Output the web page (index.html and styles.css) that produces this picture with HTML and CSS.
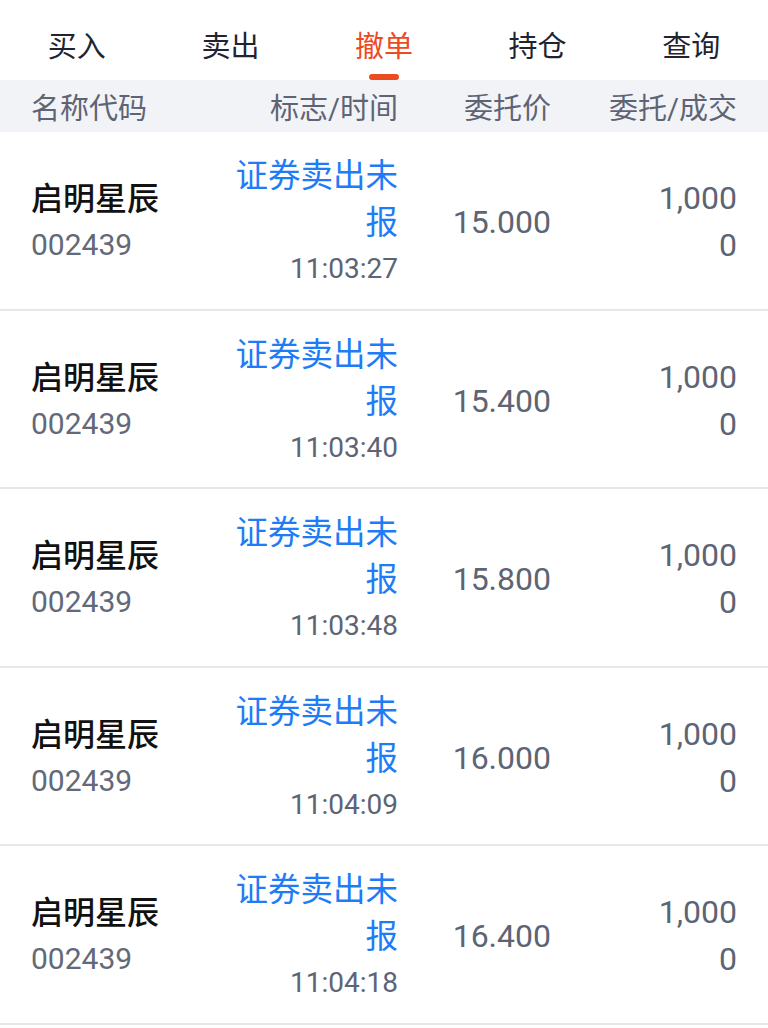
FILE: index.html
```html
<!DOCTYPE html>
<html lang="zh-CN">
<head>
    <meta charset="UTF-8">
    <meta name="viewport" content="width=device-width, initial-scale=1.0">
    <title>撤单</title>
    <link rel="stylesheet" href="styles.css">
</head>
<body>
    <div class="tabs">
        <div class="tab">买入</div>
        <div class="tab">卖出</div>
        <div class="tab active">撤单</div>
        <div class="tab">持仓</div>
        <div class="tab">查询</div>
    </div>

    <div class="list-head">
        <div class="col-name">名称代码</div>
        <div class="col-flag">标志/时间</div>
        <div class="col-price">委托价</div>
        <div class="col-qty">委托/成交</div>
    </div>

    <div id="orders">
        <div class="order">
            <div class="col-name">
                <div class="stock-name">启明星辰</div>
                <div class="stock-code">002439</div>
            </div>
            <div class="col-flag">
                <div class="flag">证券卖出未报</div>
                <div class="time">11:03:27</div>
            </div>
            <div class="col-price">15.000</div>
            <div class="col-qty">
                <div>1,000</div>
                <div>0</div>
            </div>
        </div>
        <div class="order">
            <div class="col-name">
                <div class="stock-name">启明星辰</div>
                <div class="stock-code">002439</div>
            </div>
            <div class="col-flag">
                <div class="flag">证券卖出未报</div>
                <div class="time">11:03:40</div>
            </div>
            <div class="col-price">15.400</div>
            <div class="col-qty">
                <div>1,000</div>
                <div>0</div>
            </div>
        </div>
        <div class="order">
            <div class="col-name">
                <div class="stock-name">启明星辰</div>
                <div class="stock-code">002439</div>
            </div>
            <div class="col-flag">
                <div class="flag">证券卖出未报</div>
                <div class="time">11:03:48</div>
            </div>
            <div class="col-price">15.800</div>
            <div class="col-qty">
                <div>1,000</div>
                <div>0</div>
            </div>
        </div>
        <div class="order">
            <div class="col-name">
                <div class="stock-name">启明星辰</div>
                <div class="stock-code">002439</div>
            </div>
            <div class="col-flag">
                <div class="flag">证券卖出未报</div>
                <div class="time">11:04:09</div>
            </div>
            <div class="col-price">16.000</div>
            <div class="col-qty">
                <div>1,000</div>
                <div>0</div>
            </div>
        </div>
        <div class="order">
            <div class="col-name">
                <div class="stock-name">启明星辰</div>
                <div class="stock-code">002439</div>
            </div>
            <div class="col-flag">
                <div class="flag">证券卖出未报</div>
                <div class="time">11:04:18</div>
            </div>
            <div class="col-price">16.400</div>
            <div class="col-qty">
                <div>1,000</div>
                <div>0</div>
            </div>
        </div>
    </div>
</body>
</html>
```

FILE: styles.css
```css
body {
    font-family: Roboto, "Noto Sans CJK SC", sans-serif;
    margin: 0;
    padding: 0;
    background-color: #fff;
    color: #5d6474;
}
.tabs {
    display: flex;
    height: 80px;
}
.tab {
    flex: 1;
    display: flex;
    justify-content: center;
    align-items: center;
    padding-top: 8px;
    box-sizing: border-box;
    font-size: 29px;
    color: #1f2430;
    position: relative;
}
.tab.active {
    color: #ee4a1f;
}
.tab.active::after {
    content: "";
    position: absolute;
    left: 50%;
    bottom: 0;
    width: 30px;
    height: 6px;
    margin-left: -15px;
    border-radius: 3px;
    background-color: #ee4a1f;
}
.list-head,
.order {
    display: grid;
    grid-template-columns: 1fr 170px 153px 186px;
    padding: 0 31px;
    align-items: center;
}
.list-head {
    height: 52px;
    background-color: #f2f3f7;
    font-size: 29px;
    color: #5e6475;
}
.order {
    height: 172.5px;
    padding-top: 4px;
    border-bottom: 2px solid #e5e7ed;
}
.col-flag,
.col-price,
.col-qty {
    text-align: right;
}
.stock-name {
    font-size: 32px;
    font-weight: 500;
    color: #111;
    line-height: 46px;
}
.stock-code {
    font-size: 30px;
    line-height: 46px;
    color: #626978;
}
.flag {
    font-size: 32.5px;
    line-height: 47px;
    color: #1d7cf6;
}
.time {
    font-size: 28px;
    line-height: 44px;
    color: #5d6474;
}
.order .col-price {
    font-size: 32px;
}
.order .col-qty {
    font-size: 32px;
    line-height: 47px;
}
```
